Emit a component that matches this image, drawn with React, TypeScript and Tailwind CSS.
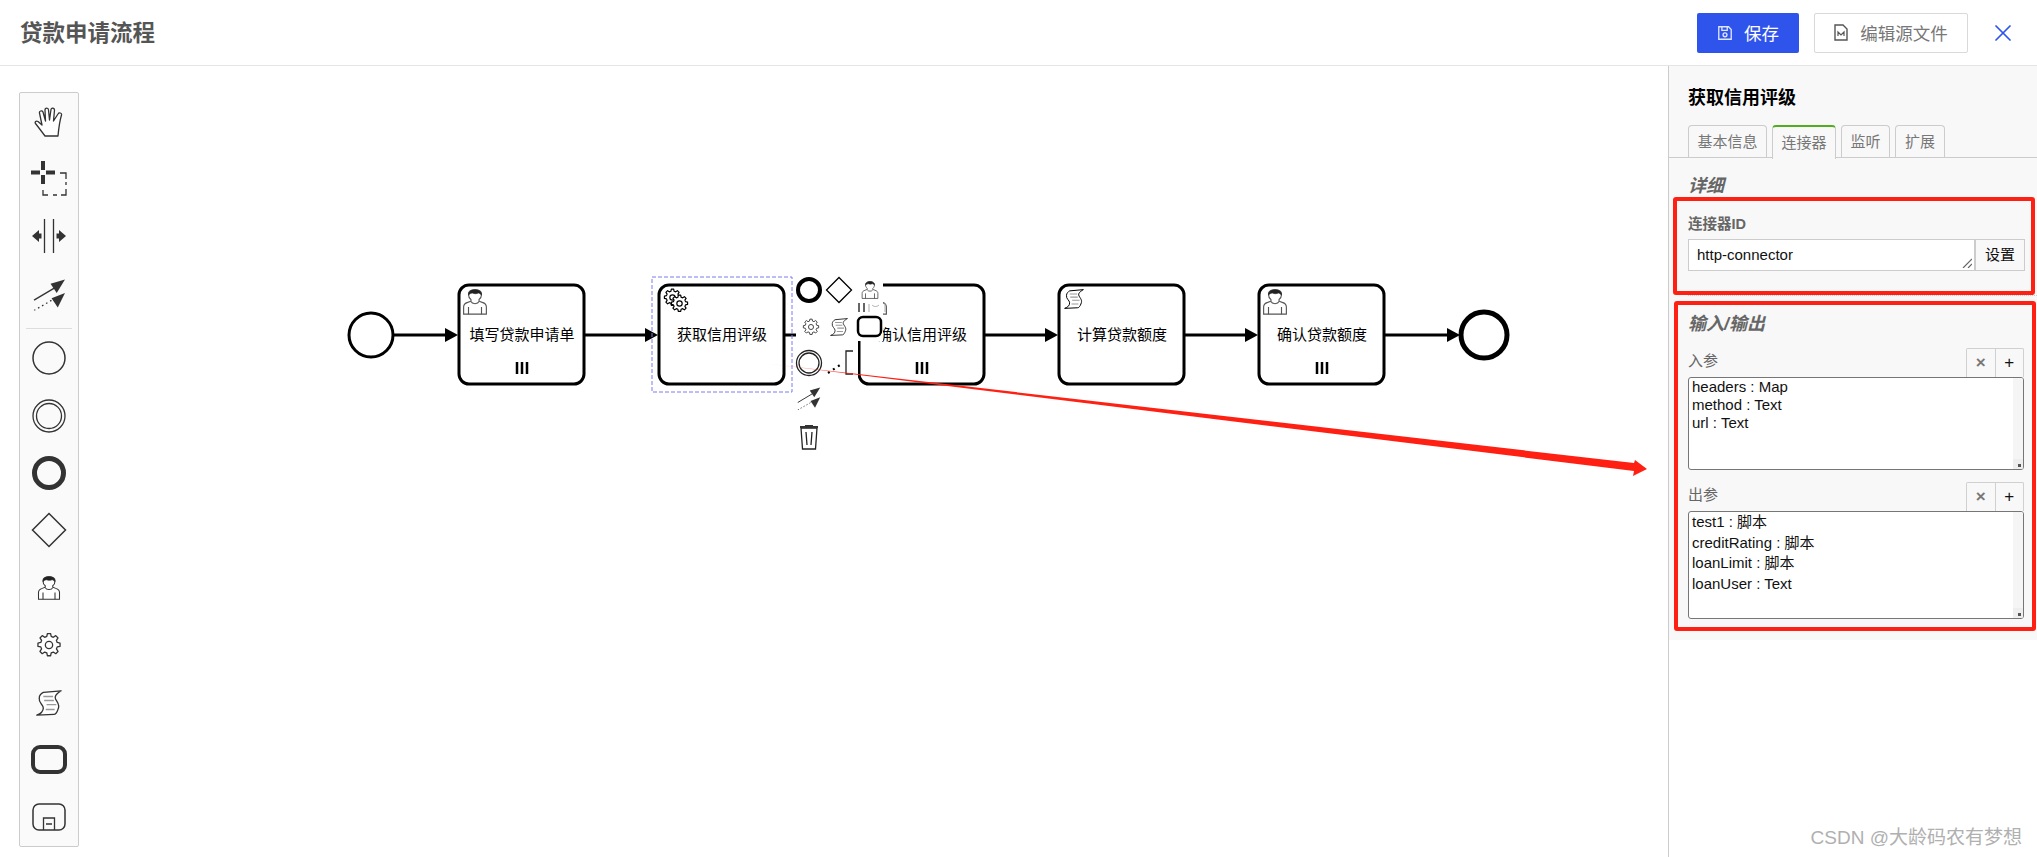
import React from 'react';
import { X } from 'lucide-react';

const FONT = "font-['Liberation_Sans','Noto_Sans_CJK_SC',sans-serif]";

// --- BPMN glyphs, each drawn in a 32x32 box ---

const UserGlyph = ({ x, y, size = 24, stroke = '#333', hair = '#222' }: { x: number; y: number; size?: number; stroke?: string; hair?: string }) => (
  <svg x={x} y={y} width={size} height={size} viewBox="0 0 32 32" fill="none" stroke={stroke} strokeWidth="1.4">
    <path d="M2 31v-9c0-3 2-4.5 5-5.5l4-1.500v-2c-2-1.500-3-4-3-6.500C8 3 11.500 1 16 1s8 2 8 5.500c0 2.500-1 5-3 6.500v2l4 1.500c3 1 5 2.500 5 5.500v9z" fill="#fff" />
    <path d="M8 7.500C8 3 11.500 1 16 1s8 2 8 6.500c-2-2-3-2.500-4-2.500-2 1-5 1-7 0-2 0-3.500 1-5 2.500z" fill={hair} stroke={hair} strokeWidth="0.8" />
    <path d="M8 31v-9M24 31v-9M11 15.500c1.500 3.500 8.500 3.500 10 0" />
  </svg>
);

const GEAR_PATH =
  'M14 2h4l.7 3.500 2.600 1 3-2 2.800 2.800-2 3 1 2.600 3.500.7v4l-3.500.7-1 2.600 2 3-2.800 2.800-3-2-2.600 1-.7 3.500h-4l-.7-3.500-2.600-1-3 2-2.800-2.800 2-3-1-2.600-3.500-.7v-4l3.500-.7 1-2.600-2-3 2.800-2.800 3 2 2.600-1z';

const GearGlyph = ({ x, y, size = 24, stroke = '#333', strokeWidth = 1.6 }: { x: number; y: number; size?: number; stroke?: string; strokeWidth?: number }) => (
  <svg x={x} y={y} width={size} height={size} viewBox="0 0 32 32" fill="none" stroke={stroke} strokeWidth={strokeWidth}>
    <path d={GEAR_PATH} fill="#fff" strokeLinejoin="round" />
    <circle cx="16" cy="16" r="4.5" />
  </svg>
);

const ScriptGlyph = ({ x, y, size = 24, stroke = '#333' }: { x: number; y: number; size?: number; stroke?: string }) => (
  <svg x={x} y={y} width={size} height={size} viewBox="0 0 32 32" fill="none" stroke={stroke} strokeWidth="1.6">
    <path d="M9 3 31 1c-5 3-9 6-7 10s6 7 3 13c-1 3-3 6-5 6L1 31c5-2 8-4 8-9 0-4-6-6-5-12 0-3 3-6 5-7z" fill="#fff" strokeLinejoin="round" />
    <path d="M9 8h12M10 13h12M13 18h12M12 24h11" strokeWidth="1.800" stroke="#999" />
  </svg>
);

const ConnectGlyph = ({ x, y, size = 32 }: { x: number; y: number; size?: number }) => (
  <svg x={x} y={y} width={size} height={size} viewBox="0 0 32 32" fill="#333" stroke="none">
    <path d="M1 22 21 10" stroke="#333" strokeWidth="1.300" fill="none" />
    <path d="M31 2 17 6l6 9z" />
    <path d="M1 32 20 21" stroke="#333" strokeWidth="1.300" strokeDasharray="1.500 3" fill="none" />
    <path d="M31 15 18 20l6 9z" />
  </svg>
);

// --- toolbar ---

const ToolSlot = ({ children }: { children: React.ReactNode }) => (
  <div className="flex h-[57.4px] items-center justify-center">{children}</div>
);

const Glyph = ({ children, size = 36 }: { children: React.ReactNode; size?: number }) => (
  <svg width={size} height={size} viewBox="0 0 36 36" fill="none" stroke="#333">
    {children}
  </svg>
);

const Toolbar = () => (
  <div className="absolute left-[19px] top-[26px] h-[755px] w-[60px] rounded-[2px] border border-[#cccccc] bg-[#fafafa]">
    <ToolSlot>
      <svg width="30" height="30" viewBox="0 0 30 30" fill="#fff" stroke="#333" strokeWidth="1.300" strokeLinejoin="round">
        <path d="M11 29C8 25 5 21 1.500 16.500 .5 15 2 13.500 4 14.500L8 18 5.500 6C5 4 8 3 9 5l2.500 9L11 3c0-2.500 3.500-2.500 3.500 0l1 10L17 2.500c.5-2 3.500-1.500 3.500.5l-1 11L24 7c1-2 4-1 3.500 1C26 13 25 18 24 29z" />
      </svg>
    </ToolSlot>
    <ToolSlot>
      <Glyph>
        <path d="M12 0v9M12 14v9M0 11.500h9M15 11.500h9" strokeWidth="4" />
        <path d="M29 12h6v6M35 21v3M35 28v6h-5M26 34h-4M17 34h-5v-5" strokeWidth="1.300" />
      </Glyph>
    </ToolSlot>
    <ToolSlot>
      <Glyph>
        <path d="M13.500 1v34M22.500 1v34" strokeWidth="1.300" />
        <path d="M1 18l7-6v3.500h2.500v5H8V24zM35 18l-7-6v3.500h-2.500v5H28V24z" fill="#333" stroke="none" />
      </Glyph>
    </ToolSlot>
    <ToolSlot>
      <svg width="33" height="34" viewBox="0 0 32 32">
        <ConnectGlyph x={0} y={0} />
      </svg>
    </ToolSlot>
    <div className="mx-[6px] mt-[5px] mb-[1px] h-[1px] bg-[#dddddd]" />
    <ToolSlot>
      <Glyph>
        <circle cx="18" cy="18" r="16" strokeWidth="1.500" />
      </Glyph>
    </ToolSlot>
    <ToolSlot>
      <Glyph>
        <circle cx="18" cy="18" r="16" strokeWidth="1.300" />
        <circle cx="18" cy="18" r="12.500" strokeWidth="1.300" />
      </Glyph>
    </ToolSlot>
    <ToolSlot>
      <Glyph>
        <circle cx="18" cy="18" r="14.500" strokeWidth="5" />
      </Glyph>
    </ToolSlot>
    <ToolSlot>
      <Glyph>
        <path d="M18 1.500 34.500 18 18 34.500 1.500 18z" strokeWidth="1.500" />
      </Glyph>
    </ToolSlot>
    <ToolSlot>
      <svg width="24" height="24" viewBox="0 0 24 24">
        <UserGlyph x={0} y={0} size={24} />
      </svg>
    </ToolSlot>
    <ToolSlot>
      <svg width="26" height="26" viewBox="0 0 26 26">
        <GearGlyph x={0} y={0} size={26} />
      </svg>
    </ToolSlot>
    <ToolSlot>
      <svg width="26" height="26" viewBox="0 0 26 26">
        <ScriptGlyph x={0} y={0} size={26} />
      </svg>
    </ToolSlot>
    <ToolSlot>
      <svg width="36" height="29" viewBox="0 0 36 29" fill="none" stroke="#333">
        <rect x="2" y="2" width="32" height="25" rx="7" strokeWidth="4" />
      </svg>
    </ToolSlot>
    <ToolSlot>
      <svg width="34" height="28" viewBox="0 0 34 28" fill="none" stroke="#333">
        <rect x="1" y="1" width="32" height="26" rx="6" strokeWidth="1.500" />
        <path d="M11.500 27V15h11v12M14 21h6" strokeWidth="1.300" />
      </svg>
    </ToolSlot>
  </div>
);

// --- diagram canvas ---

const tasks = [
  { x: 458, label: '填写贷款申请单', kind: 'user', multi: true },
  { x: 658, label: '获取信用评级', kind: 'service', multi: false },
  { x: 858, label: '确认信用评级', kind: 'user', multi: true },
  { x: 1058, label: '计算贷款额度', kind: 'script', multi: false },
  { x: 1258, label: '确认贷款额度', kind: 'user', multi: true },
];

const FLOW_Y = 269;
const TASK_TOP = 218;

const Arrow = ({ from, to }: { from: number; to: number }) => (
  <g>
    <path d={`M${from} ${FLOW_Y}H${to - 10}`} stroke="#000" strokeWidth="3" />
    <path d={`M${to - 13} ${FLOW_Y - 7}L${to} ${FLOW_Y}L${to - 13} ${FLOW_Y + 7}z`} fill="#000" />
  </g>
);

const Diagram = () => (
  <svg className="absolute left-0 top-0 h-full w-full" viewBox="0 0 1668 791" fill="none">
    <defs>
      <linearGradient id="redArrow" gradientUnits="userSpaceOnUse" x1="762" y1="297" x2="860" y2="308">
        <stop offset="0" stopColor="#ff2014" stopOpacity="0" />
        <stop offset="1" stopColor="#ff2014" />
      </linearGradient>
    </defs>

    <circle cx="371" cy={FLOW_Y} r="22" stroke="#000" strokeWidth="3" fill="#fff" />
    <Arrow from={393} to={458} />
    <Arrow from={585} to={658} />
    <Arrow from={785} to={858} />
    <Arrow from={985} to={1058} />
    <Arrow from={1185} to={1258} />
    <Arrow from={1385} to={1460} />
    <circle cx="1484" cy={FLOW_Y} r="23" stroke="#000" strokeWidth="5" fill="#fff" />

    {tasks.map((t) => (
      <g key={t.x}>
        <rect x={t.x + 1} y={TASK_TOP + 1} width={125} height={99} rx="10" fill="#fff" stroke="#000" strokeWidth="3" />
        <text
          x={t.x + 64}
          y={FLOW_Y - 1}
          textAnchor="middle"
          dominantBaseline="central"
          fill="#000"
          fontSize="15"
          fontFamily="'Liberation Sans','Noto Sans CJK SC',sans-serif"
        >
          {t.label}
        </text>
        {t.multi && <path d={`M${t.x + 59} ${TASK_TOP + 78}v12M${t.x + 64} ${TASK_TOP + 78}v12M${t.x + 69} ${TASK_TOP + 78}v12`} stroke="#000" strokeWidth="2.500" />}
        {t.kind === 'user' && <UserGlyph x={t.x + 4} y={TASK_TOP + 5} size={26} stroke="#555" />}
        {t.kind === 'script' && <ScriptGlyph x={t.x + 6} y={TASK_TOP + 5} size={20} stroke="#000" />}
        {t.kind === 'service' && (
          <>
            <GearGlyph x={t.x + 5} y={TASK_TOP + 4} size={19} stroke="#000" strokeWidth={2} />
            <GearGlyph x={t.x + 12} y={TASK_TOP + 10} size={19} stroke="#000" strokeWidth={2} />
          </>
        )}
      </g>
    ))}

    {/* selection outline */}
    <rect x="652" y="211" width="140" height="115" stroke="#7b7bf0" strokeWidth="1" strokeDasharray="4 2" />

    {/* context pad, white tiles over the shapes */}
    <rect x="796" y="212" width="62" height="108" fill="#fff" />
    <rect x="857" y="212" width="26" height="63" fill="#fff" />
    <rect x="796" y="320" width="30" height="66" fill="#fff" />
    <circle cx="809" cy="224" r="11" stroke="#000" strokeWidth="4" />
    <path d="M839 211.500 851.500 224 839 236.500 826.500 224z" stroke="#000" strokeWidth="1.300" fill="#fff" />
    <UserGlyph x={861} y={215} size={18} stroke="#444" />
    <GearGlyph x={802} y={252} size={18} stroke="#333" strokeWidth={1.6} />
    <ScriptGlyph x={830} y={252} size={18} stroke="#222" />
    <path d="M859 237v9M864 237v9" stroke="#666" strokeWidth="2" />
    <path d="M869 238v8M872 239c2 2 5 2 7 0M885 237v9" stroke="#aaa" strokeWidth="1" />
    <rect x="858" y="251" width="23" height="19" rx="5" stroke="#000" strokeWidth="2.500" fill="#fff" />
    <circle cx="809" cy="297" r="12.500" stroke="#222" strokeWidth="1.300" />
    <circle cx="809" cy="297" r="10" stroke="#222" strokeWidth="1.300" />
    <path d="M828 307 843 297" stroke="#000" strokeWidth="2.200" strokeDasharray="2 4" />
    <path d="M853 285h-7v23h7" stroke="#222" strokeWidth="1.300" />
    <ConnectGlyph x={797} y={320} size={24} />
    <g stroke="#222" strokeWidth="1.300">
      <path d="M801 362h16l-1.500 21h-13z" />
      <path d="M806 366l1 13M812 366l-1 13" />
      <path d="M800 361h18M805 360h8" strokeWidth="2.200" stroke="#333" />
    </g>

    {/* red annotation arrow */}
    <path d="M762 297 1634 397 1635 394 1647 403 1633 410 1634 405z" fill="url(#redArrow)" />
  </svg>
);

// --- right side panel ---

const PanelHeading = ({ children }: { children: React.ReactNode }) => (
  <div className="text-[18px] leading-[24px] font-bold text-[#666666] italic">{children}</div>
);

const ParamList = ({
  title,
  rows,
  listClass,
  rowClass,
}: {
  title: string;
  rows: React.ReactNode[];
  listClass: string;
  rowClass: string;
}) => (
  <div>
    <div className="flex h-[29px] items-center justify-between">
      <span className="mb-[3px] text-[15px] text-[#666666]">{title}</span>
      <div className="flex h-[29px] w-[58px] rounded-t-[2px] border border-b-0 border-[#d0d0d0] text-[17px]">
        <span className="flex flex-1 items-center justify-center border-r border-[#d0d0d0] font-bold text-[#777777]">×</span>
        <span className="flex flex-1 items-center justify-center text-[#111111]">+</span>
      </div>
    </div>
    <div className={`relative overflow-hidden rounded-[3px] border border-[#767676] bg-white pl-[3px] text-[15px] text-[#111111] ${listClass}`}>
      {rows.map((row, i) => (
        <div key={i} className={rowClass}>
          {row}
        </div>
      ))}
      <div className="absolute top-0 right-0 bottom-0 w-[10px] bg-[#f5f5f5]" />
      <div className="absolute right-0 bottom-0 flex h-[10px] w-[10px] items-center justify-center bg-[#eeeeee]">
        <span className="mt-[2px] ml-[2px] h-[3px] w-[3px] bg-[#555555]" />
      </div>
    </div>
  </div>
);

const SidePanel = () => (
  <aside className="w-[369px] shrink-0 border-l border-[#cccccc] bg-white">
    <div className="relative h-[574px] bg-[#f8f8f8]">
      <div className="h-[92px] border-b border-[#cccccc] pl-[19px]">
        <div className="pt-[20px] text-[18px] leading-[24px] font-bold text-black">获取信用评级</div>
        <div className="mt-[15px] flex h-[33px] gap-[5px] text-[15px] text-[#777777]">
          <span className="flex w-[79px] items-center justify-center rounded-t-[4px] border border-b-0 border-[#cccccc]">基本信息</span>
          <span className="relative z-10 flex h-[34px] w-[64px] items-center justify-center rounded-t-[4px] border-x border-t-2 border-x-[#cccccc] border-t-[#52ae1f] bg-[#f8f8f8]">连接器</span>
          <span className="flex w-[49px] items-center justify-center rounded-t-[4px] border border-b-0 border-[#cccccc]">监听</span>
          <span className="flex w-[50px] items-center justify-center rounded-t-[4px] border border-b-0 border-[#cccccc]">扩展</span>
        </div>
      </div>

      <div className="pt-[16px] pl-[19px]">
        <PanelHeading>详细</PanelHeading>
        <div className="mt-[16px] text-[14.500px] leading-[20px] font-bold text-[#666666]">连接器ID</div>
        <div className="mt-[5px] flex h-[32px] w-[337px] border border-[#cccccc] bg-white text-[15px]">
          <div className="relative flex-1 pl-[8px] leading-[29px] text-[#111111]">
            http-connector
            <svg className="absolute right-[2px] bottom-[2px]" width="10" height="10" viewBox="0 0 10 10" stroke="#666666" strokeWidth="1.200">
              <path d="M1 10 10 1M6 10l4-4" />
            </svg>
          </div>
          <div className="flex w-[50px] items-center justify-center border-l-2 border-[#cccccc] bg-[#f8f8f8] text-[#111111]">设置</div>
        </div>
        <div className="mt-[24px] w-[349px] border-t border-dotted border-[#cccccc]" />

        <div className="mt-[16px]">
          <PanelHeading>输入/输出</PanelHeading>
        </div>
        <div className="mt-[12px] w-[336px]">
          <ParamList
            title="入参"
            listClass="h-[93px]"
            rowClass="h-[18px] leading-[18px]"
            rows={['headers : Map', 'method : Text', 'url : Text']}
          />
          <div className="mt-[12px]">
            <ParamList
              title="出参"
              listClass="h-[108px]"
              rowClass="h-[20.700px] leading-[20.700px]"
              rows={['test1 : 脚本', 'creditRating : 脚本', 'loanLimit : 脚本', 'loanUser : Text']}
            />
          </div>
        </div>
      </div>

      {/* red annotation frames */}
      <div className="absolute top-[131px] left-[4px] h-[98px] w-[362px] rounded-[3px] border-[4px] border-[#ff2014]" />
      <div className="absolute top-[235px] left-[5px] h-[330px] w-[362px] rounded-[3px] border-[4px] border-[#ff2014]" />
    </div>
  </aside>
);

export default function App() {
  return (
    <div className={`relative flex h-[857px] w-[2037px] flex-col overflow-hidden bg-white ${FONT}`}>
      <header className="flex h-[66px] shrink-0 items-center border-b border-[#e5e5e5] pr-[20px] pl-[20px]">
        <h1 className="pt-[3px] text-[22.500px] font-bold text-[#555555]">贷款申请流程</h1>
        <div className="ml-auto flex items-center">
          <button className="flex h-[40px] w-[102px] items-center justify-center gap-[11px] rounded-[2px] bg-[#2f54eb] text-[17.500px] text-white">
            <svg width="16" height="16" viewBox="0 0 18 18" fill="none" stroke="#dfe6ff" strokeWidth="1.500">
              <path d="M2 2h11l3 3v11H2z" />
              <path d="M5.500 2v4h6V2" />
              <circle cx="9" cy="11" r="2.200" />
            </svg>
            <span className="pt-[3px]">保存</span>
          </button>
          <button className="ml-[15px] flex h-[40px] w-[154px] items-center justify-center gap-[12px] rounded-[2px] border border-[#d9d9d9] bg-white text-[17.500px] text-[#777777]">
            <svg width="14" height="17" viewBox="0 0 14 17" fill="none" stroke="#555555" strokeWidth="1.400">
              <path d="M1 1h8l4 4v11H1z" />
              <path d="M4 12V8l3 3 3-3v4" strokeWidth="1.200" />
            </svg>
            <span className="pt-[3px]">编辑源文件</span>
          </button>
          <X className="ml-[21px]" size={28} strokeWidth={1.500} color="#2f54eb" />
        </div>
      </header>

      <main className="flex min-h-0 flex-1">
        <section className="relative flex-1">
          <Diagram />
          <Toolbar />
        </section>
        <SidePanel />
      </main>

      <div className="absolute right-[15px] bottom-[8px] text-[19px] leading-[22px] text-[#b0b0b0]">CSDN @大龄码农有梦想</div>
    </div>
  );
}
